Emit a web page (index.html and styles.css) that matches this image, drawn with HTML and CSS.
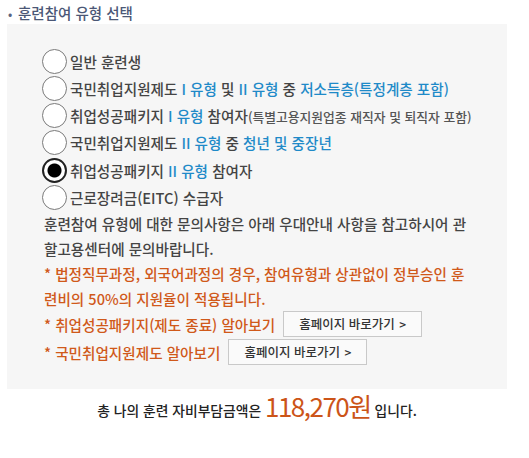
FILE: index.html
```html
<!DOCTYPE html>
<html lang="ko">
<head>
<meta charset="utf-8">
<title>훈련참여 유형 선택</title>
<link rel="stylesheet" href="styles.css">
</head>
<body>
<div class="page">
  <h2 class="title"><span class="dot">•</span>훈련참여 유형 선택</h2>
  <div class="box">
    <ul class="options">
      <li><input type="radio" name="type" class="radio"><span>일반 훈련생</span></li>
      <li><input type="radio" name="type" class="radio"><span>국민취업지원제도 <em class="blue">I 유형</em> 및 <em class="blue">II 유형</em> 중 <em class="blue">저소득층(특정계층 포함)</em></span></li>
      <li><input type="radio" name="type" class="radio"><span>취업성공패키지 <em class="blue">I 유형</em> 참여자<small>(특별고용지원업종 재직자 및 퇴직자 포함)</small></span></li>
      <li><input type="radio" name="type" class="radio"><span>국민취업지원제도 <em class="blue">II 유형</em> 중 <em class="blue">청년 및 중장년</em></span></li>
      <li><input type="radio" name="type" class="radio" checked><span>취업성공패키지 <em class="blue">II 유형</em> 참여자</span></li>
      <li><input type="radio" name="type" class="radio"><span>근로장려금(EITC) 수급자</span></li>
    </ul>
    <p class="info">훈련참여 유형에 대한 문의사항은 아래 우대안내 사항을 참고하시어 관할고용센터에 문의바랍니다.</p>
    <p class="note">* 법정직무과정, 외국어과정의 경우, 참여유형과 상관없이 정부승인 훈련비의 50%의 지원율이 적용됩니다.</p>
    <div class="link-row"><span class="note">* 취업성공패키지(제도 종료) 알아보기</span><button class="btn" type="button">홈페이지 바로가기 <span class="chev">&gt;</span></button></div>
    <div class="link-row"><span class="note">* 국민취업지원제도 알아보기</span><button class="btn" type="button">홈페이지 바로가기 <span class="chev">&gt;</span></button></div>
  </div>
  <p class="total">총 나의 훈련 자비부담금액은 <strong class="amount">118,270원</strong> 입니다.</p>
</div>
</body>
</html>
```

FILE: styles.css
```css
* { box-sizing: border-box; }
html, body { margin: 0; padding: 0; background: #fff; }
body {
  font-family: "Noto Sans CJK KR", "Noto Sans", sans-serif;
  color: #444;
  font-size: 14.6px;
  font-weight: 500;
}
.page { width: 500px; margin-left: 7px; }
.title {
  margin: 0;
  height: 24px;
  line-height: 26px;
  font-size: 14.5px;
  font-weight: 500;
  color: #4b5776;
  padding-left: 1px;
}
.title .dot { display: inline-block; width: 10px; font-size: 12px; color: #5a6480; }
.box {
  background: #f6f6f6;
  padding: 24px 35px 24px 37px;
}
.options { list-style: none; margin: 0; padding: 0; }
.options li {
  display: flex;
  align-items: center;
  height: 27px;
  margin-left: -2px;
  white-space: nowrap;
}
.options li:nth-child(5) { margin-top: 1px; }
.radio {
  appearance: none;
  -webkit-appearance: none;
  width: 25px;
  height: 25px;
  margin: 0 3px 0 0;
  border: 1px solid #7a7a7a;
  border-radius: 50%;
  background: #fff;
  flex: none;
}
.radio:checked {
  border: 2px solid #222;
  background: radial-gradient(circle, #000 0 6.5px, #fff 7.5px);
}
.blue { color: #1f8ac8; font-style: normal; }
small { font-size: 12.8px; color: #555; }
.info, .note {
  margin: 0;
  line-height: 25px;
  word-break: break-all;
}
.note { color: #d0591a; }
.info { color: #444; }
.link-row {
  display: flex;
  align-items: center;
  gap: 8px;
  height: 26px;
}
.link-row + .link-row { margin-top: 2px; }
.btn {
  width: 139px;
  height: 26px;
  padding: 0;
  background: #fafafa;
  border: 1px solid #c9c9c9;
  font-family: "Noto Sans CJK KR", sans-serif;
  font-size: 12.5px;
  font-weight: 500;
  color: #333;
  line-height: 24px;
}
.chev { font-size: 12px; margin-left: 1px; }
.total {
  margin: 0;
  text-align: center;
  font-size: 13.8px;
  color: #222;
  height: 40px;
  line-height: 34px;
}
.amount {
  font-weight: 400;
  font-size: 26px;
  color: #cc5418;
  letter-spacing: -1.5px;
  vertical-align: -1px;
}
```
